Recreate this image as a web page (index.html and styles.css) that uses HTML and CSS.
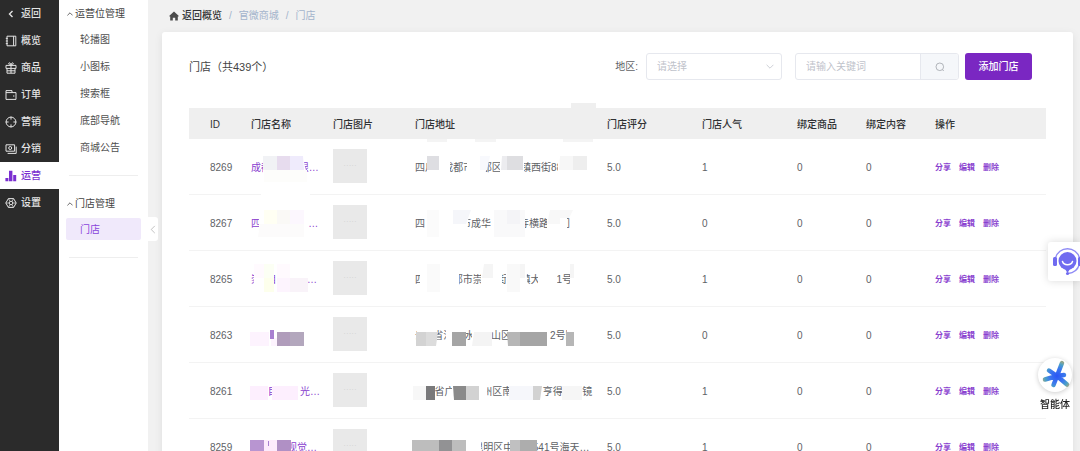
FILE: index.html
```
<!DOCTYPE html>
<html lang="zh-CN">
<head>
    <meta charset="UTF-8">
    <meta name="viewport" content="width=device-width, initial-scale=1.0">
    <title>门店</title>
    <link rel="stylesheet" href="styles.css">
</head>
<body>
    <div class="layout">
        <nav class="main-nav">
            <a href="#"><svg viewBox="0 0 12 12"><path d="M7.5 3L4.5 6l3 3" stroke-width="1.4"/></svg>返回</a>
            <a href="#"><svg viewBox="0 0 12 12"><path d="M2 1.2h8.8v9.6H2zM8.6 1.2v9.6M.8 3.4h2M.8 6h2M.8 8.6h2"/></svg>概览</a>
            <a href="#"><svg viewBox="0 0 12 12"><path d="M1 3.4h10v3H1zM2 6.4v4.8h8V6.4M6 3.4v7.8M6 3.2C3.4 3.2 3.2.8 4.4.8S6 3.2 6 3.2 6.4.8 7.6.8 8.6 3.2 6 3.2M2 8.8h8"/></svg>商品</a>
            <a href="#"><svg viewBox="0 0 12 12"><path d="M1 10.4V1.6h6v2h4v6.8zM1 3.6h6M8 7h1.4"/></svg>订单</a>
            <a href="#"><svg viewBox="0 0 12 12"><circle cx="6" cy="6" r="4.9"/><path d="M6 .6v3M6 8.4v3M.6 6h3M8.4 6h3"/></svg>营销</a>
            <a href="#"><svg viewBox="0 0 12 12"><path d="M1 1.8h8.6v6.4H1zM11.2 3.6v6.8H2.6"/><circle cx="5.2" cy="5" r="1.5"/></svg>分销</a>
            <a href="#" class="active"><svg viewBox="0 0 12 12"><path d="M.4 8h3v3.2h-3zM4 .8h3.4v10.4H4zM8.2 5h3v6.2h-3z" fill="currentColor" stroke="none"/></svg>运营</a>
            <a href="#"><svg viewBox="0 0 12 12"><path d="M3.4 1.6h5.2L11.2 6l-2.6 4.4H3.4L.8 6z"/><circle cx="6" cy="6" r="1.8"/><path d="M3.4 1.6L5 4.4M8.6 1.6L7 4.4M3.4 10.4L5 7.6M8.6 10.4L7 7.6M.8 6h3.4M7.8 6h3.4" stroke-width=".7"/></svg>设置</a>
        </nav>

        <aside class="sub-nav">
            <section>
                <h2><svg viewBox="0 0 6 4"><path d="M.4 3.4L3 .8l2.6 2.6"/></svg>运营位管理</h2>
                <a href="#">轮播图</a>
                <a href="#">小图标</a>
                <a href="#">搜索框</a>
                <a href="#">底部导航</a>
                <a href="#">商城公告</a>
            </section>
            <section>
                <h2><svg viewBox="0 0 6 4"><path d="M.4 3.4L3 .8l2.6 2.6"/></svg>门店管理</h2>
                <a href="#" class="active">门店</a>
            </section>
            <button class="collapse" aria-label="收起"><svg viewBox="0 0 6 10"><path d="M5 1L1 5l4 4"/></svg></button>
        </aside>

        <main class="content">
            <div class="breadcrumb">
                <svg viewBox="0 0 10 10"><path d="M5 .6L.4 4.8v.6h.8v4h2.6V6.8h2.4v2.6h2.6v-4h.8v-.6z"/></svg>
                <a href="#" class="home">返回概览</a>
                <span>/</span>
                <a href="#">官微商城</a>
                <span>/</span>
                <a href="#">门店</a>
            </div>

            <div class="card">
                <div class="toolbar">
                    <h1>门店（共439个）</h1>
                    <label for="area">地区:</label>
                    <div class="select">
                        <select id="area">
                            <option>请选择</option>
                        </select>
                        <svg viewBox="0 0 8 5"><path d="M.6.8L4 4.2 7.4.8"/></svg>
                    </div>
                    <div class="search">
                        <input type="text" placeholder="请输入关键词" aria-label="关键词">
                        <button aria-label="搜索"><svg viewBox="0 0 10 10"><circle cx="4.8" cy="4.8" r="3.8"/><path d="M7.4 7.6l1.4 1.4"/></svg></button>
                    </div>
                    <button class="add">添加门店</button>
                </div>

                <table>
                    <colgroup>
                        <col class="col-id">
                        <col class="col-name">
                        <col class="col-name">
                        <col class="col-address">
                        <col class="col-score">
                        <col class="col-score">
                        <col class="col-bind">
                        <col class="col-bind">
                        <col class="col-action">
                    </colgroup>
                    <thead>
                        <tr>
                            <th>ID</th>
                            <th>门店名称</th>
                            <th>门店图片</th>
                            <th class="masked">门店地址<svg class="mask head-mask" viewBox="408 103 192 40" width="192" height="40"><path fill="#efefef" d="M571 103h25v6h-25z"/><path fill="#f4f4f4" d="M427 139h20v3h-20zM475 139h21v3h-21zM563 139h30v3h-30z"/></svg></th>
                            <th>门店评分</th>
                            <th>门店人气</th>
                            <th>绑定商品</th>
                            <th>绑定内容</th>
                            <th>操作</th>
                        </tr>
                    </thead>
                    <tbody>
                        <tr>
                            <td>8269</td>
                            <td class="masked"><a href="#">成都          眼…</a><svg class="mask" viewBox="244 139 82 56" width="82" height="56"><path fill="#fff" d="M263 156h40l4 22h-44zM261 192h49v3h-49z"/><path fill="#f1f2f5" d="M263 156h14v14h-14z"/><path fill="#e7dcee" d="M277 156h13v14h-13z"/><path fill="#efebfc" d="M290 156h13l1 14h-14z"/><path fill="#fdfdfb" d="M264 170h43v12h-43z"/></svg></td>
                            <td class="picture"><div class="photo">·····</div></td>
                            <td class="masked"><span>四川   成都市   都区       镇西街88</span><svg class="mask" viewBox="408 139 192 56" width="192" height="56"><path fill="#fff" d="M427 156h23v22h-23zM467 156h21l-3 22h-18zM500 156h24v22h-24zM558 156h30v22h-30z"/><path fill="#dedee2" d="M427 156h12v14h-12z"/><path fill="#f8f9fd" d="M480 156h10l-3 14h-7z"/><path fill="#ececef" d="M502 156h5v14h-6z"/><path fill="#dedee1" d="M507 156h16v14h-16z"/><path fill="#f7f7f7" d="M560 156h13v14h-14z"/><path fill="#eee" d="M573 156h14v14h-14z"/></svg></td>
                            <td>5.0</td>
                            <td>1</td>
                            <td>0</td>
                            <td>0</td>
                            <td class="actions"><a href="#">分享</a><a href="#">编辑</a><a href="#">删除</a></td>
                        </tr>
                        <tr>
                            <td>8267</td>
                            <td class="masked"><a href="#">四                 …</a><svg class="mask" viewBox="244 195 82 56" width="82" height="56"><path fill="#fff" d="M259 210h45v27h-45z"/><path fill="#fffff3" d="M264 210h13v14h-13z"/><path fill="#faf9f6" d="M277 210h13v14h-13z"/><path fill="#fcf7fe" d="M290 210h14v14h-14z"/><path fill="#fcfbfb" d="M260 224h44v13h-46z"/></svg></td>
                            <td class="picture"><div class="photo">·····</div></td>
                            <td class="masked"><span>四             市成华          寺横路    门</span><svg class="mask" viewBox="408 195 192 56" width="192" height="56"><path fill="#fff" d="M425 210h44l-2 26h-42zM491 210h34v26h-34zM547 210h20v26h-20zM570 210h12v26h-12z"/><path fill="#fbfbfb" d="M427 210h12v27h-12z"/><path fill="#f5f6fa" d="M453 210h18l-5 14h-13z"/><path fill="#f9f9fa" d="M494 210h31v27h-31z"/><path fill="#f4f4f7" d="M507 210h13v14h-13z"/><path fill="#f8f8f8" d="M550 210h10v14h-13zM560 210h13l-4 8h-9z"/></svg></td>
                            <td>5.0</td>
                            <td>0</td>
                            <td>0</td>
                            <td>0</td>
                            <td class="actions"><a href="#">分享</a><a href="#">编辑</a><a href="#">删除</a></td>
                        </tr>
                        <tr>
                            <td>8265</td>
                            <td class="masked"><a href="#">崇  目           …</a><svg class="mask" viewBox="244 251 82 56" width="82" height="56"><path fill="#fff" d="M254 264h20v28h-20zM276 264h32v28h-32z"/><path fill="#fffafe" d="M254 264h10v14h-10zM277 264h13v14h-13z"/><path fill="#fcfff4" d="M264 264h10v14h-10z"/><path fill="#fdffec" d="M264 278h10v14h-10z"/><path fill="#fdf4fe" d="M277 278h13v14h-13z"/><path fill="#f9f3f9" d="M290 278h18v14h-18z"/></svg></td>
                            <td class="picture"><div class="photo">·····</div></td>
                            <td class="masked"><span>四          都市崇     街     镇大    11号</span><svg class="mask" viewBox="408 251 192 56" width="192" height="56"><path fill="#fff" d="M420 264h39v28h-39zM481 264h21v28h-21zM506 264h20l2 28h-22zM538 264h19v28h-19zM570 264h12v28h-12z"/><path fill="#fafafa" d="M427 264h13v28h-13z"/><path fill="#f5f5f5" d="M484 264h9v14h-11zM520 264h5v14h-5zM570 264h4v14h-4z"/><path fill="#f9f9f9" d="M507 264h13v28h-13z"/></svg></td>
                            <td>5.0</td>
                            <td>1</td>
                            <td>0</td>
                            <td>0</td>
                            <td class="actions"><a href="#">分享</a><a href="#">编辑</a><a href="#">删除</a></td>
                        </tr>
                        <tr>
                            <td>8263</td>
                            <td class="masked"><svg class="mask" viewBox="244 307 82 56" width="82" height="56"><path fill="#fdf3fe" d="M250 332h19v14h-19zM271 338h6v8h-6z"/><path fill="#a87fd0" d="M270 330h4v9h-4z"/><path fill="#b09cbb" d="M277 332h13v14h-13z"/><path fill="#b3a7bd" d="M290 332h14v14h-14z"/></svg></td>
                            <td class="picture"><div class="photo">·····</div></td>
                            <td class="masked"><span>云   省江    水      山区              2号附</span><svg class="mask" viewBox="408 307 192 56" width="192" height="56"><path fill="#fff" d="M417 325h20v20h-20zM446 325h20v20h-20zM472 325h20v20h-20zM508 325h40v20h-40zM567 325h12v20h-12z"/><path fill="#d3d3d3" d="M416 332h10v14h-10z"/><path fill="#dcdcdc" d="M426 332h12l-2 14h-10z"/><path fill="#a5a5a5" d="M452 332h14v14h-14zM520 332h27v14h-27z"/><path fill="#f4f4f4" d="M474 332h18v14h-20z"/><path fill="#b6b6b6" d="M507 332h13v14h-12zM566 332h8v14h-8z"/></svg></td>
                            <td>5.0</td>
                            <td>0</td>
                            <td>0</td>
                            <td>0</td>
                            <td class="actions"><a href="#">分享</a><a href="#">编辑</a><a href="#">删除</a></td>
                        </tr>
                        <tr>
                            <td>8261</td>
                            <td class="masked"><a href="#">      目        光…</a><svg class="mask" viewBox="244 363 82 56" width="82" height="56"><path fill="#fff" d="M250 377h18v22h-18zM272 377h26v22h-26z"/><path fill="#fdeffe" d="M250 386h18v14h-18zM272 386h26v14h-26z"/></svg></td>
                            <td class="picture"><div class="photo">·····</div></td>
                            <td class="masked"><span>       省广          州区南           亨得       镜</span><svg class="mask" viewBox="408 363 192 56" width="192" height="56"><path fill="#fff" d="M452 380h35v20h-35zM509 380h33v20h-33z"/><path fill="#f7f7f7" d="M413 386h13v14h-13z"/><path fill="#79797b" d="M426 386h9v14h-9z"/><path fill="#8a8a8a" d="M453 386h13v14h-12z"/><path fill="#d2d2d2" d="M466 386h13v14h-13zM533 386h9l-2 14h-7z"/><path fill="#f6f7fb" d="M509 386h24v14h-24z"/><path fill="#f6f6f6" d="M562 386h20v14h-20z"/></svg></td>
                            <td>5.0</td>
                            <td>1</td>
                            <td>0</td>
                            <td>0</td>
                            <td class="actions"><a href="#">分享</a><a href="#">编辑</a><a href="#">删除</a></td>
                        </tr>
                        <tr>
                            <td>8259</td>
                            <td class="masked"><a href="#">             视觉…</a><svg class="mask" viewBox="244 419 82 56" width="82" height="56"><path fill="#b895d1" d="M250 440h14v14h-14z"/><path fill="#fdebfc" d="M264 440h13v14h-13z"/><path fill="#a87fd0" d="M268 441h1v5h-1z"/><path fill="#b090c5" d="M277 440h14v14h-14z"/></svg></td>
                            <td class="picture"><div class="photo">·····</div></td>
                            <td class="masked"><span>                     昆明区中       541号海天…</span><svg class="mask" viewBox="408 419 192 56" width="192" height="56"><path fill="#fff" d="M466 436h15v20h-15zM510 436h26v20h-26z"/><path fill="#bdbdbd" d="M412 440h27v14h-27zM452 440h14v14h-14z"/><path fill="#929294" d="M439 440h13v14h-13z"/><path fill="#c0c0c1" d="M510 440h10v14h-10z"/><path fill="#adadad" d="M520 440h17v14h-17z"/></svg></td>
                            <td>5.0</td>
                            <td>1</td>
                            <td>0</td>
                            <td>0</td>
                            <td class="actions"><a href="#">分享</a><a href="#">编辑</a><a href="#">删除</a></td>
                        </tr>
                    </tbody>
                </table>
            </div>
        </main>
    </div>

    <button class="service" aria-label="客服">
        <svg viewBox="0 0 30 30">
            <circle cx="14.500" cy="14" r="9" fill="#706bf0"/>
            <path d="M2.500 11a12.400 12.400 0 0 1 24 0M26.500 17c-1.500 5.500-5.500 9-11.500 9.500" fill="none" stroke="#8f8bf5" stroke-width="1.4"/>
            <rect x="0" y="10" width="4" height="9" rx="1.500" fill="#706bf0"/>
            <rect x="25" y="10" width="4" height="9" rx="1.500" fill="#706bf0"/>
            <path d="M9.500 14.500c1.400 4.400 8.600 4.400 10 0" fill="none" stroke="#fff" stroke-width="1.500" stroke-linecap="round"/>
            <path d="M12 22h5l-2.500 4z" fill="#706bf0"/>
            <circle cx="14.500" cy="26.500" r="1.500" fill="#706bf0"/>
        </svg>
    </button>

    <button class="agent">
        <span class="agent-icon">
            <svg viewBox="0 0 34 34">
                <defs>
                    <radialGradient id="star" cx="19" cy="18" r="15" gradientUnits="userSpaceOnUse">
                        <stop offset="0" stop-color="#2a55f5"/>
                        <stop offset=".5" stop-color="#3c78ee"/>
                        <stop offset=".8" stop-color="#4aa0c8"/>
                        <stop offset="1" stop-color="#93a58c"/>
                    </radialGradient>
                </defs>
                <g stroke="url(#star)" stroke-width="4.500" stroke-linecap="round">
                    <path d="M19 18l5-13M19 18L11 12.500M19 18L7 21.500M19 18l-3.500 9M19 18l10 8.500M19 18l7-1"/>
                </g>
            </svg>
        </span>
        智能体
    </button>
</body>
</html>
```
FILE: styles.css
```
* {
    box-sizing: border-box;
}
body {
    margin: 0;
    height: 100vh;
    overflow: hidden;
    font-family: "Liberation Sans", "Noto Sans CJK SC", sans-serif;
    font-size: 10px;
    line-height: 14px;
    color: #606266;
    background-color: #f1f1f1;
}
a {
    color: inherit;
    text-decoration: none;
}
button, input, select {
    font: inherit;
    margin: 0;
    padding: 0;
    border: none;
    border-radius: 0;
    background: none;
}
button {
    cursor: pointer;
}
svg {
    display: block;
    fill: none;
    stroke: currentColor;
}
.layout {
    display: flex;
    height: 100%;
}

/* dark main navigation */
.main-nav {
    flex: none;
    width: 59px;
    background-color: #2b2b2b;
    color: #e4e4e4;
}
.main-nav a {
    display: flex;
    align-items: center;
    gap: 4px;
    height: 27px;
    padding-left: 5px;
    font-weight: 500;
}
.main-nav svg {
    width: 12px;
    height: 12px;
}
.main-nav .active {
    background-color: #fff;
    color: #7a2fd0;
}

/* second level navigation */
.sub-nav {
    position: relative;
    flex: none;
    width: 89px;
    background-color: #fff;
    color: #505050;
}
.sub-nav section {
    margin: 0 7px;
    padding-bottom: 14px;
}
.sub-nav section::after {
    content: "";
    display: block;
    height: 1px;
    margin: 17px 3px 0;
    background-color: #eee;
}
.sub-nav h2 {
    display: flex;
    align-items: center;
    gap: 2px;
    margin: 0;
    padding-left: 1px;
    height: 28px;
    font-size: 10px;
    font-weight: 400;
    color: #444;
}
.sub-nav h2 svg {
    width: 6px;
    height: 4px;
    stroke-width: 0.8;
}
.sub-nav a {
    display: block;
    height: 22px;
    margin-bottom: 5px;
    padding: 5px 14px 3px;
    border-radius: 2px;
}
.sub-nav .active {
    background-color: #f0e9fb;
    color: #8a45dc;
}
.sub-nav .collapse {
    position: absolute;
    left: 100%;
    top: 217px;
    width: 10px;
    height: 24px;
    padding-left: 2px;
    background-color: #fff;
    border-radius: 0 3px 3px 0;
    color: #aaa;
}
.collapse svg {
    width: 6px;
    height: 9px;
    stroke-width: 0.8;
}

/* content */
.content {
    flex: 1;
    min-width: 0;
    padding: 0 7px 0 14px;
    overflow: hidden;
}
.breadcrumb {
    display: flex;
    align-items: center;
    gap: 7px;
    height: 32px;
    padding-left: 7px;
    color: #a3b4cc;
}
.breadcrumb svg {
    width: 10px;
    height: 10px;
    margin-right: -4px;
    fill: #4a4a4a;
    stroke: none;
}
.breadcrumb .home {
    color: #303133;
    font-weight: 500;
}
.card {
    padding: 21px 27px;
    background-color: #fff;
    border-radius: 3px;
    box-shadow: 0 2px 8px rgba(0, 0, 0, 0.08);
}
.toolbar {
    display: flex;
    align-items: center;
    height: 27px;
    margin: 0 14px 28px 0;
}
.toolbar h1 {
    flex: 1;
    margin: 0;
    font-size: 11px;
    font-weight: 400;
    color: #444;
}
.toolbar label {
    margin-right: 8px;
}
.select {
    position: relative;
    width: 136px;
    height: 27px;
    margin-right: 13px;
}
.select select {
    width: 100%;
    height: 100%;
    padding: 0 10px;
    appearance: none;
    background-color: #fff;
    border: 1px solid #e6e8ee;
    border-radius: 3px;
    color: #bfc3cb;
}
.select svg {
    position: absolute;
    right: 8px;
    top: 11px;
    width: 8px;
    height: 5px;
    color: #c0c4cc;
    stroke-width: 0.8;
    pointer-events: none;
}
.search {
    display: flex;
    width: 164px;
    height: 27px;
    margin-right: 6px;
    border: 1px solid #e6e8ee;
    border-radius: 3px;
    overflow: hidden;
}
.search input {
    flex: 1;
    min-width: 0;
    padding: 0 10px;
}
.search input::placeholder {
    color: #bfc3cb;
}
.search button {
    display: grid;
    place-items: center;
    width: 38px;
    background-color: #f5f7fa;
    border-left: 1px solid #e6e8ee;
    color: #a0a3aa;
}
.search svg {
    width: 10px;
    height: 10px;
    stroke-width: 0.8;
}
.add {
    width: 67px;
    height: 27px;
    background-color: #7a27c2;
    border-radius: 3px;
    color: #fff;
    font-weight: 500;
}

/* store table */
table {
    width: 100%;
    table-layout: fixed;
    border-collapse: separate;
    border-spacing: 0;
}
.col-id {
    width: 55px;
}
.col-name {
    width: 82px;
}
.col-address {
    width: 192px;
}
.col-score {
    width: 95px;
}
.col-bind {
    width: 69px;
}
.col-action {
    width: 118px;
}
th, td {
    padding: 2px 0 0 7px;
    text-align: left;
    white-space: pre;
}
th:first-child, td:first-child {
    padding-left: 21px;
}
th {
    height: 31px;
    background-color: #efefef;
    color: #303133;
    font-weight: 500;
}
td {
    height: 56px;
    border-bottom: 1px solid #f3f3f3;
}
td a {
    color: #8a3fcf;
}
.picture {
    padding: 0 0 2px 7px;
}
.photo {
    width: 34px;
    height: 34px;
    background-color: #e9e9e9;
    color: #d2d2d2;
    font-size: 8px;
    line-height: 34px;
    text-align: center;
}
.actions a {
    margin-right: 8px;
    font-size: 8px;
    font-weight: 700;
}

/* mosaic blocks over private names and addresses */
.masked {
    position: relative;
}
.mask {
    position: absolute;
    left: 0;
    top: 0;
    stroke: none;
    pointer-events: none;
}
.head-mask {
    top: -5px;
}

/* floating widgets */
.service {
    position: fixed;
    right: 0;
    top: 242px;
    width: 32px;
    height: 39px;
    padding-left: 5px;
    overflow: hidden;
    background-color: #fff;
    border-radius: 3px 0 0 3px;
    box-shadow: 0 0 8px rgba(0, 0, 0, 0.15);
}
.service svg {
    width: 30px;
    height: 30px;
    stroke: none;
}
.agent {
    position: fixed;
    right: 8px;
    top: 358px;
    display: flex;
    flex-direction: column;
    align-items: center;
    gap: 6px;
    color: #222;
    font-weight: 500;
}
.agent-icon {
    width: 34px;
    height: 34px;
    background-color: #fff;
    border-radius: 50%;
    box-shadow: 0 1px 5px rgba(0, 0, 0, 0.2);
}
.agent svg {
    width: 34px;
    height: 34px;
}
```
